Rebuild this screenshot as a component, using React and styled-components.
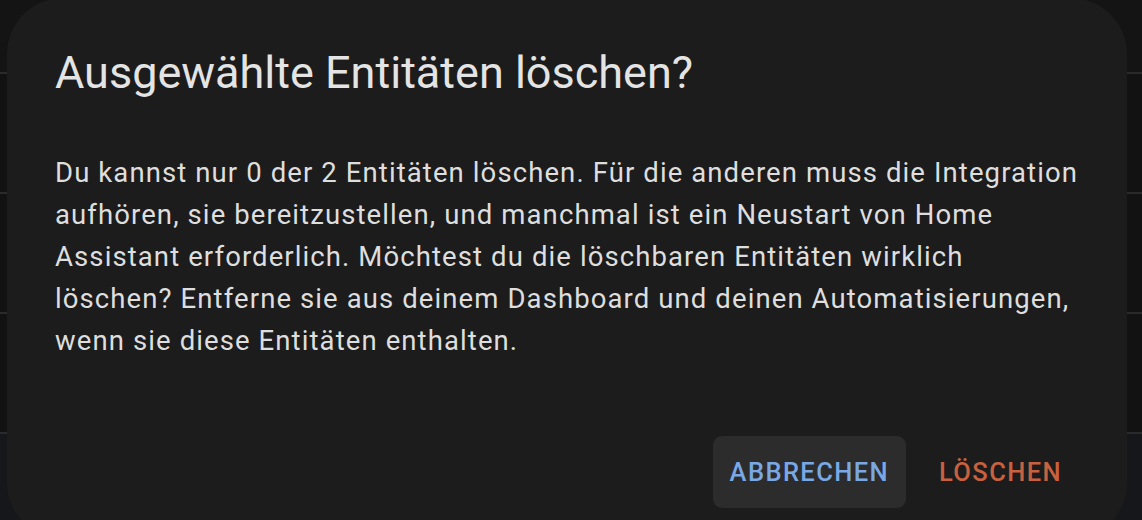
import React from "react";
import styled, { createGlobalStyle } from "styled-components";

const Global = createGlobalStyle`
  html, body {
    margin: 0;
    padding: 0;
    background: #121212;
    overflow: hidden;
  }
  body {
    font-family: Roboto, "Noto Sans", "Liberation Sans", sans-serif;
    -webkit-font-smoothing: antialiased;
  }
`;

const Page = styled.div`
  position: relative;
  width: 1142px;
  height: 520px;
  overflow: hidden;
  display: flex;
  flex-direction: column;
  background: #121212;
`;

const HeaderBand = styled.div`
  height: 72px;
  flex: none;
  background: #141414;
`;

const Row = styled.div`
  height: 118px;
  flex: none;
  border-top: 2px solid #2a2a2a;
  background: #121212;
`;

const Footer = styled.div`
  flex: 1;
  border-top: 2px solid #2a2a2a;
  background: #16171a;
`;

const Dialog = styled.div`
  position: absolute;
  left: 7px;
  top: -2px;
  width: 1120px;
  height: 541px;
  box-sizing: border-box;
  border-radius: 56px;
  background: #1c1c1c;
  padding: 47px 48px 0 48px;
  display: flex;
  flex-direction: column;
  color: #e3e3e3;
`;

const Title = styled.h2`
  margin: 0;
  font-size: 45px;
  line-height: 56px;
  font-weight: 400;
  color: #e4e4e4;
`;

const Body = styled.p`
  margin: 51px 0 0 0;
  font-size: 27.5px;
  line-height: 42px;
  letter-spacing: 1.1px;
  font-weight: 400;
  color: #dedede;
`;

const Actions = styled.div`
  margin-top: 74px;
  display: flex;
  justify-content: flex-end;
  gap: 16px;
`;

const Button = styled.button`
  height: 72px;
  padding: 0 17px 0 17px;
  border: none;
  border-radius: 9px;
  background: ${(p) => (p.$focused ? "#2c2c2c" : "transparent")};
  color: ${(p) => (p.$danger ? "#c8613f" : "#7aa8e4")};
  font-family: Roboto, "Noto Sans", "Liberation Sans", sans-serif;
  font-size: 25.5px;
  font-weight: 500;
  letter-spacing: 1.4px;
  text-transform: uppercase;
  cursor: pointer;
`;

export default function App() {
  return (
    <>
      <Global />
      <Page>
        <HeaderBand />
        <Row />
        <Row />
        <Row />
        <Footer />
        <Dialog role="dialog">
          <Title>Ausgewählte Entitäten löschen?</Title>
          <Body>
            Du kannst nur 0 der 2 Entitäten löschen. Für die anderen muss die
            Integration aufhören, sie bereitzustellen, und manchmal ist ein
            Neustart von Home Assistant erforderlich. Möchtest du die
            löschbaren Entitäten wirklich löschen? Entferne sie aus deinem
            Dashboard und deinen Automatisierungen, wenn sie diese Entitäten
            enthalten.
          </Body>
          <Actions>
            <Button $focused>Abbrechen</Button>
            <Button $danger>Löschen</Button>
          </Actions>
        </Dialog>
      </Page>
    </>
  );
}
